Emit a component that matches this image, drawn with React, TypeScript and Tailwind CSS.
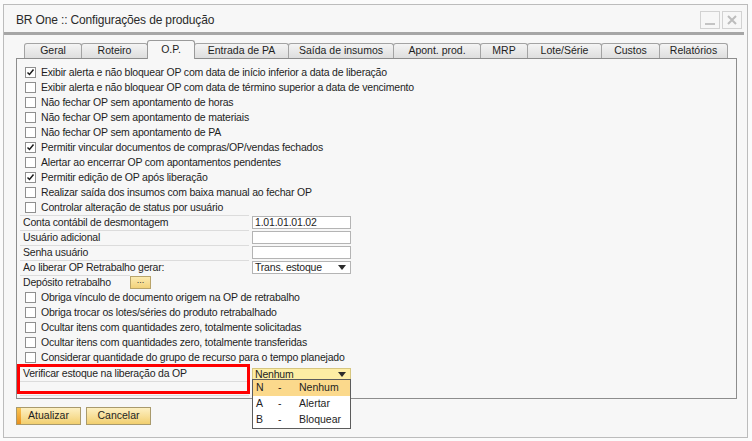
import React from 'react';

const font = { fontFamily: '"Liberation Sans", Arial, sans-serif' };

const tabs = [
  { label: 'Geral', w: 'w-[58px]' },
  { label: 'Roteiro', w: 'w-[67px]' },
  { label: 'O.P.', w: 'w-[48px]', active: true },
  { label: 'Entrada de PA', w: 'w-[95px]' },
  { label: 'Saída de insumos', w: 'w-[106px]' },
  { label: 'Apont. prod.', w: 'w-[88px]' },
  { label: 'MRP', w: 'w-[48px]' },
  { label: 'Lote/Série', w: 'w-[75px]' },
  { label: 'Custos', w: 'w-[59px]' },
  { label: 'Relatórios', w: 'w-[69px]' },
];

const topChecks: [string, boolean][] = [
  ['Exibir alerta e não bloquear OP com data de início inferior a data de liberação', true],
  ['Exibir alerta e não bloquear OP com data de término superior a data de vencimento', false],
  ['Não fechar OP sem apontamento de horas', false],
  ['Não fechar OP sem apontamento de materiais', false],
  ['Não fechar OP sem apontamento de PA', false],
  ['Permitir vincular documentos de compras/OP/vendas fechados', true],
  ['Alertar ao encerrar OP com apontamentos pendentes', false],
  ['Permitir edição de OP após liberação', true],
  ['Realizar saída dos insumos com baixa manual ao fechar OP', false],
  ['Controlar alteração de status por usuário', false],
];

const bottomChecks = [
  'Obriga vínculo de documento origem na OP de retrabalho',
  'Obriga trocar os lotes/séries do produto retrabalhado',
  'Ocultar itens com quantidades zero, totalmente solicitadas',
  'Ocultar itens com quantidades zero, totalmente transferidas',
  'Considerar quantidade do grupo de recurso para o tempo planejado',
];

const CheckRow = ({ label, checked }: { label: string; checked?: boolean }) => (
  <div className="flex h-[15px] items-center pl-[8px]">
    <div className="flex h-[11px] w-[11px] shrink-0 items-center justify-center border border-[#8f8f8f] bg-white">
      {checked && (
        <svg width="9" height="9" viewBox="0 0 9 9">
          <path d="M1.5 4.5 L3.5 6.5 L7.5 1.5" fill="none" stroke="#1b1b1b" strokeWidth="1.5" />
        </svg>
      )}
    </div>
    <span className="ml-[5px] text-[10.5px] tracking-[-0.2px] text-[#1e1e1e]">{label}</span>
  </div>
);

const Arrow = () => (
  <svg width="8" height="5" viewBox="0 0 8 5">
    <path d="M0 0 H8 L4 5 Z" fill="#2b2b2b" />
  </svg>
);

const FieldRow = ({ label, children }: { label: string; children?: React.ReactNode }) => (
  <div className="flex h-[15px] items-center">
    <div className="ml-[3px] flex h-[15px] w-[229px] shrink-0 items-center border-t border-[#dcdcdc] pl-[3px] text-[10.5px] tracking-[-0.2px] text-[#1e1e1e]">
      {label}
    </div>
    <div className="ml-[3px]">{children}</div>
  </div>
);

const Input = ({ value, select }: { value?: string; select?: boolean }) => (
  <div className="flex h-[13px] w-[99px] items-center justify-between border border-[#b4b4b4] bg-white pl-[2px] pr-[4px] text-[10.5px] tracking-[-0.2px] text-[#1e1e1e]">
    <span>{value}</span>
    {select && <Arrow />}
  </div>
);

export default function App() {
  return (
    <div className="relative h-[441px] w-[752px] overflow-hidden bg-[#fbfbfb] pl-[3px] pt-[4px]" style={font}>
      <div className="flex h-[434px] w-[745px] flex-col border border-[#bcbcbc] bg-[#f7f7f7]">
        {/* title bar */}
        <div className="flex h-[27px] items-center justify-between pl-[12px] pr-[5px] pt-[3px]">
          <span className="text-[12px] tracking-[-0.15px] text-[#2a2a2a]">BR One :: Configurações de produção</span>
          <div className="flex gap-[2px]">
            <div className="flex h-[18px] w-[20px] items-end justify-center border border-[#d2d2d2] pb-[3px]">
              <div className="h-[2px] w-[10px] bg-[#c4c4c4]" />
            </div>
            <div className="flex h-[18px] w-[20px] items-center justify-center border border-[#d2d2d2]">
              <svg width="10" height="10" viewBox="0 0 10 10">
                <path d="M1 1 L9 9 M9 1 L1 9" stroke="#bdbdbd" strokeWidth="2" />
              </svg>
            </div>
          </div>
        </div>
        <div className="mr-[3px] h-[3px] bg-[#a6a6a6]" />

        {/* tabs */}
        <div className="ml-[21px] mt-[5px] flex h-[18px] items-end">
          {tabs.map((t) => (
            <div
              key={t.label}
              className={
                t.active
                  ? `relative z-10 -mb-px -ml-px flex h-[19px] ${t.w} items-center justify-center rounded-t-[3px] border border-b-0 border-[#9a9a9a] bg-[#f7f7f7] text-[10.5px] text-[#1e1e1e]`
                  : `-ml-px flex h-[15px] ${t.w} items-center justify-center rounded-t-[3px] border border-b-0 border-[#a3a3a3] bg-gradient-to-b from-[#f4f4f4] to-[#dedede] text-[10.5px] text-[#1e1e1e]`
              }
            >
              {t.label}
            </div>
          ))}
        </div>

        {/* panel */}
        <div className="ml-[12px] h-[341px] w-[721px] border border-[#8d8d8d] bg-[#f7f7f7] pt-[6px]">
          {topChecks.map(([l, c]) => (
            <CheckRow key={l} label={l} checked={c} />
          ))}
          <FieldRow label="Conta contábil de desmontagem">
            <Input value="1.01.01.01.02" />
          </FieldRow>
          <FieldRow label="Usuário adicional">
            <Input />
          </FieldRow>
          <FieldRow label="Senha usuário">
            <Input />
          </FieldRow>
          <FieldRow label="Ao liberar OP Retrabalho gerar:">
            <Input value="Trans. estoque" select />
          </FieldRow>
          <div className="grid h-[15px] grid-cols-[110px_21px] items-center pl-[3px]">
            <div className="flex h-[15px] items-center border-t border-[#dcdcdc] pl-[3px] text-[10.5px] tracking-[-0.2px] text-[#1e1e1e]">
              Depósito retrabalho
            </div>
            <div className="flex h-[13px] items-start justify-center border border-[#b9a46a] bg-gradient-to-b from-[#fbeab0] to-[#f2d27a] text-[9px] leading-[7px] text-[#333]">
              ...
            </div>
          </div>
          {bottomChecks.map((l) => (
            <CheckRow key={l} label={l} />
          ))}
          <div className="mt-[2px] flex h-[15px] items-center">
            <div className="ml-[3px] flex h-[15px] w-[229px] shrink-0 items-center border-b border-[#dcdcdc] pl-[3px] text-[10.5px] tracking-[-0.2px] text-[#1e1e1e]">
              Verificar estoque na liberação da OP
            </div>
            <div className="ml-[3px] flex h-[13px] w-[99px] items-center justify-between border border-[#d6c680] bg-[#fdeda4] pl-[2px] pr-[4px] text-[10.5px] tracking-[-0.2px] text-[#1e1e1e]">
              <span>Nenhum</span>
              <Arrow />
            </div>
          </div>
          <div className="ml-[3px] h-[14px] w-[229px] border-b border-[#dcdcdc]" />
        </div>

        {/* buttons */}
        <div className="ml-[12px] mt-[8px] flex gap-[5px]">
          <div className="relative flex h-[18px] w-[65px] items-center justify-center overflow-hidden border border-[#a99a6c] bg-gradient-to-b from-[#fdf0c2] to-[#f2cf6e] text-[10.5px] text-[#1e1e1e]">
            <div className="absolute bottom-0 left-0 top-0 w-[4px] bg-gradient-to-b from-[#f8c552] to-[#e9901a]" />
            Atualizar
          </div>
          <div className="flex h-[18px] w-[65px] items-center justify-center border border-[#a99a6c] bg-gradient-to-b from-[#fdf0c2] to-[#f2cf6e] text-[10.5px] text-[#1e1e1e]">
            Cancelar
          </div>
        </div>
      </div>

      {/* red highlight annotation */}
      <div className="absolute left-[17px] top-[364px] h-[30px] w-[233px] border-[3px] border-[#ff0000]" />

      {/* open dropdown list */}
      <div className="absolute left-[252px] top-[379px] w-[99px] border border-[#5c5c5c] bg-white text-[10.5px] text-[#1e1e1e]">
        {[
          ['N', 'Nenhum'],
          ['A', 'Alertar'],
          ['B', 'Bloquear'],
        ].map(([k, v], i) => (
          <div key={k} className={`flex h-[16px] items-center ${i === 0 ? 'bg-[#fbd98c]' : ''}`}>
            <span className="ml-[3px] w-[22px]">{k}</span>
            <span className="w-[21px]">-</span>
            <span>{v}</span>
          </div>
        ))}
      </div>
    </div>
  );
}
